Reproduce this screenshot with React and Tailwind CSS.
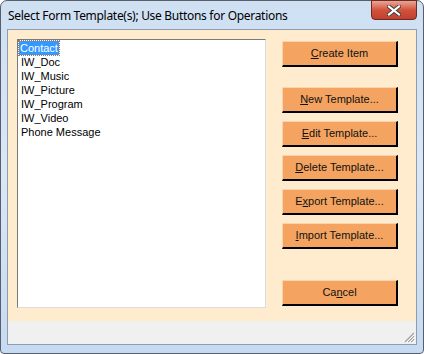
import React from "react";

const items = ["Contact", "IW_Doc", "IW_Music", "IW_Picture", "IW_Program", "IW_Video", "Phone Message"];

const buttons = [
  { pre: "", key: "E", post: "dit Template..." },
  { pre: "", key: "D", post: "elete Template..." },
  { pre: "E", key: "x", post: "port Template..." },
  { pre: "", key: "I", post: "mport Template..." },
];

const SandButton = ({ pre, mnemonic, post, className = "" }) => (
  <button
    className={
      "w-[116px] h-[26px] bg-[#F4A460] border-t border-l border-t-[#fbd3ad] border-l-[#fbd3ad] border-b-2 border-r-2 border-b-black border-r-black text-[11px] text-[#111] flex items-center justify-center " +
      className
    }
  >
    <span>
      {pre}
      <span className="underline">{mnemonic}</span>
      {post}
    </span>
  </button>
);

export default function App() {
  return (
    <div className="w-[424px] h-[354px] bg-white" style={{ fontFamily: '"Liberation Sans", Arial, sans-serif' }}>
      <div className="w-[424px] h-[354px] rounded-t-[7px] rounded-b-[4px] border border-[#585f6b] bg-gradient-to-b from-[#cfe0f3] via-[#d9e7f6] to-[#c6daf1] flex flex-col">
        {/* Title bar */}
        <div className="h-[28px] flex items-start relative">
          <div
            className="pl-[7px] pt-[6px] text-[12px] tracking-[-0.3px] text-black"
            style={{ fontFamily: '"Noto Sans", "Open Sans", sans-serif' }}
          >
            Select Form Template(s); Use Buttons for Operations
          </div>
          <div className="absolute right-[6px] top-[-1px] w-[46px] h-[20px] rounded-b-[4px] border border-[#6e2a22] bg-gradient-to-b from-[#e7a596] via-[#d2513b] to-[#c04030] flex items-center justify-center">
            <svg width="14" height="11" viewBox="0 0 14 11">
              <path d="M2 1.5 L12 9.5 M12 1.5 L2 9.5" stroke="#3b3b3b" strokeWidth="4" strokeLinecap="square" />
              <path d="M2 1.5 L12 9.5 M12 1.5 L2 9.5" stroke="#ffffff" strokeWidth="2.2" strokeLinecap="square" />
            </svg>
          </div>
        </div>

        {/* Client area */}
        <div className="mx-[6px] h-[316px] border border-[#8e9cad] flex flex-col">
          <div className="h-[291px] bg-[#FFEBCD] flex pl-[9px] pt-[9px]">
            {/* List box */}
            <div className="w-[249px] h-[269px] bg-white border-t border-l border-t-[#7a7a7a] border-l-[#7a7a7a] border-b border-r border-b-[#dcdcdc] border-r-[#dcdcdc] pt-[1px] pl-[2px] text-[11px] leading-[14px] text-black">
              {items.map((it, i) =>
                i === 0 ? (
                  <div key={it} className="inline-block bg-[#3399FF] text-white outline outline-1 outline-dotted outline-[#c07030] px-[1px] -ml-[1px]">
                    {it}
                  </div>
                ) : (
                  <div key={it} className="pl-[1px]">{it}</div>
                )
              )}
            </div>

            {/* Buttons */}
            <div className="ml-[16px] pt-[2px] flex flex-col">
              <SandButton pre="" mnemonic="C" post="reate Item" />
              <SandButton pre="" mnemonic="N" post="ew Template..." className="mt-[20px]" />
              {buttons.map((b) => (
                <SandButton key={b.post} pre={b.pre} mnemonic={b.key} post={b.post} className="mt-[8px]" />
              ))}
              <SandButton pre="Ca" mnemonic="n" post="cel" className="mt-[31px]" />
            </div>
          </div>
          <div className="flex-1 bg-[#F0F0F0] flex items-end justify-end pr-[1px] pb-[1px]">
            <svg width="12" height="12" viewBox="0 0 12 12">
              <path d="M11 2 L2 11 M11 5 L5 11 M11 8 L8 11" stroke="#a0a0a0" strokeWidth="1.2" />
              <path d="M12 3 L3 12 M12 6 L6 12 M12 9 L9 12" stroke="#ffffff" strokeWidth="1" />
            </svg>
          </div>
        </div>
      </div>
    </div>
  );
}
